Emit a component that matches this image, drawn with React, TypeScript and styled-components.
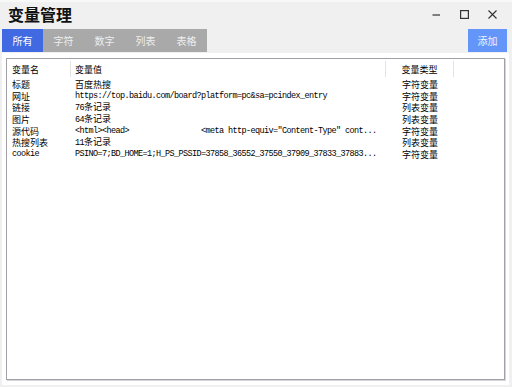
import React from "react";
import styled, { createGlobalStyle } from "styled-components";

const Global = createGlobalStyle`
  html, body { margin: 0; padding: 0; background: #f0f0f0; }
  #root { width: 512px; height: 387px; }
`;

const Window = styled.div`
  width: 512px;
  height: 387px;
  box-sizing: border-box;
  background: #f0f0f0;
  border-top: 2px solid #f8f8f8;
  display: flex;
  flex-direction: column;
  font-family: "Noto Sans CJK SC", sans-serif;
`;

const TitleBar = styled.div`
  height: 27px;
  box-sizing: border-box;
  display: flex;
  align-items: center;
  padding: 0 6px 3px 8px;
`;

const Title = styled.div`
  font-size: 16px;
  font-weight: 700;
  color: #111;
  line-height: 1;
`;

const Controls = styled.div`
  margin-left: auto;
  display: flex;
  height: 100%;
`;

const CtrlBtn = styled.div`
  width: 28px;
  height: 100%;
  display: flex;
  align-items: center;
  justify-content: center;
  color: #333;
`;

const TabRow = styled.div`
  height: 23px;
  display: flex;
  padding: 0 5px 0 2px;
`;

const Tab = styled.div<{ $active?: boolean }>`
  width: 41px;
  height: 100%;
  display: flex;
  align-items: center;
  justify-content: center;
  font-size: 10px;
  background: ${(p) => (p.$active ? "#4169e1" : "#a9a9a9")};
  color: ${(p) => (p.$active ? "#ffffff" : "#eeeeee")};
`;

const AddButton = styled.div`
  margin-left: auto;
  width: 39px;
  height: 100%;
  display: flex;
  align-items: center;
  justify-content: center;
  font-size: 10px;
  background: #6496fa;
  color: #eef2ff;
`;

const Panel = styled.div`
  flex: 1;
  margin: 1px 3px 2px 2px;
  background: #ffffff;
  padding: 5px 4px 5px 4px;
  display: flex;
`;

const ListBox = styled.div`
  flex: 1;
  border: 1px solid #a0a0a6;
  box-shadow: 1px 1px 0 #d6d6d6;
  background: #fff;
  display: flex;
  flex-direction: column;
`;

const Grid = styled.div<{ $h: number }>`
  display: grid;
  grid-template-columns: 64px 315px 68px 1fr;
  height: ${(p) => p.$h}px;
  align-items: center;
  color: #000;
`;

const HeadCell = styled.div<{ $center?: boolean; $pad?: number; $divider?: boolean }>`
  height: 16px;
  box-sizing: border-box;
  display: flex;
  align-items: center;
  justify-content: ${(p) => (p.$center ? "center" : "flex-start")};
  padding-left: ${(p) => p.$pad ?? 0}px;
  border-right: ${(p) => (p.$divider ? "1px solid #e3e3e3" : "none")};
  font-size: 9px;
`;

const Cell = styled.div<{ $center?: boolean; $pad?: number }>`
  display: flex;
  align-items: baseline;
  justify-content: ${(p) => (p.$center ? "center" : "flex-start")};
  padding-left: ${(p) => p.$pad ?? 0}px;
  line-height: 11.7px;
  white-space: pre;
  overflow: hidden;
`;

const Han = styled.span`
  font-family: "Noto Sans CJK SC", sans-serif;
  font-size: 9px;
`;

const Latin = styled.span`
  font-family: "Liberation Mono", monospace;
  font-size: 8.5px;
  letter-spacing: -0.6px;
  white-space: pre;
`;

const Mixed: React.FC<{ text: string }> = ({ text }) => {
  const parts = text.split(/([\u3000-\u9fff\uff00-\uffef]+)/).filter((s) => s.length);
  return (
    <>
      {parts.map((p, i) =>
        /[\u3000-\u9fff\uff00-\uffef]/.test(p) ? <Han key={i}>{p}</Han> : <Latin key={i}>{p}</Latin>
      )}
    </>
  );
};

const rows: [string, string, string][] = [
  ["标题", "百度热搜", "字符变量"],
  ["网址", "https://top.baidu.com/board?platform=pc&sa=pcindex_entry", "字符变量"],
  ["链接", "76条记录", "列表变量"],
  ["图片", "64条记录", "列表变量"],
  ["源代码", '<html><head>                <meta http-equiv="Content-Type" cont...', "字符变量"],
  ["热搜列表", "11条记录", "列表变量"],
  ["cookie", "PSINO=7;BD_HOME=1;H_PS_PSSID=37858_36552_37550_37909_37833_37883...", "字符变量"],
];

export default function App() {
  return (
    <>
      <Global />
      <Window>
        <TitleBar>
          <Title>变量管理</Title>
          <Controls>
            <CtrlBtn>
              <svg width="9" height="9" viewBox="0 0 9 9">
                <line x1="0.5" y1="5" x2="8" y2="5" stroke="#333" strokeWidth="1.2" />
              </svg>
            </CtrlBtn>
            <CtrlBtn>
              <svg width="9" height="9" viewBox="0 0 9 9">
                <rect x="0.6" y="0.6" width="7.8" height="7.8" fill="none" stroke="#333" strokeWidth="1.2" />
              </svg>
            </CtrlBtn>
            <CtrlBtn>
              <svg width="9" height="9" viewBox="0 0 9 9">
                <path d="M0.5 0.5 L8.5 8.5 M8.5 0.5 L0.5 8.5" stroke="#333" strokeWidth="1.1" />
              </svg>
            </CtrlBtn>
          </Controls>
        </TitleBar>
        <TabRow>
          <Tab $active>所有</Tab>
          <Tab>字符</Tab>
          <Tab>数字</Tab>
          <Tab>列表</Tab>
          <Tab>表格</Tab>
          <AddButton>添加</AddButton>
        </TabRow>
        <Panel>
          <ListBox>
            <Grid $h={20}>
              <HeadCell $pad={5} $divider>变量名</HeadCell>
              <HeadCell $pad={4} $divider>变量值</HeadCell>
              <HeadCell $center $divider>变量类型</HeadCell>
              <HeadCell />
            </Grid>
            {rows.map(([n, v, t], i) => (
              <Grid $h={11.7} key={i}>
                <Cell $pad={5}><Mixed text={n} /></Cell>
                <Cell $pad={4}><Mixed text={v} /></Cell>
                <Cell $center><Mixed text={t} /></Cell>
                <Cell />
              </Grid>
            ))}
          </ListBox>
        </Panel>
      </Window>
    </>
  );
}
